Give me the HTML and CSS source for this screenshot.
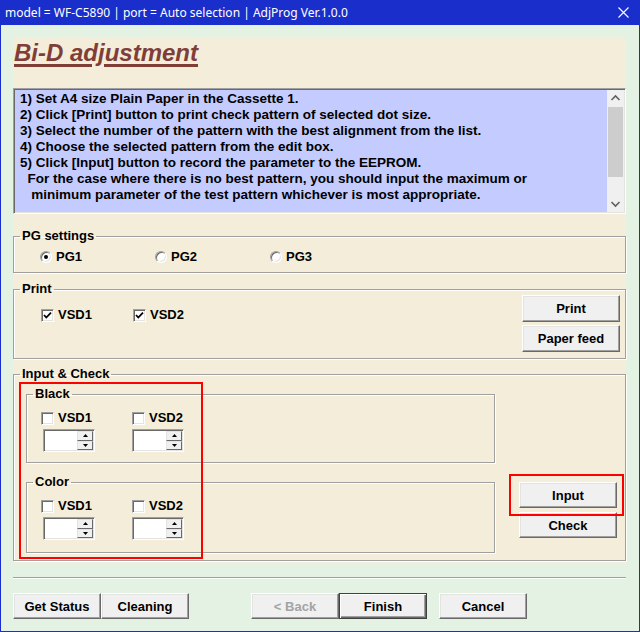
FILE: index.html
```html
<!DOCTYPE html>
<html>
<head>
<meta charset="utf-8">
<title>Bi-D adjustment</title>
<link rel="stylesheet" href="styles.css">
</head>
<body>
<div class="window">
  <div class="titlebar">
    <span class="title-text">model = WF-C5890 | port = Auto selection | AdjProg Ver.1.0.0</span>
    <svg class="close" width="11" height="11" viewBox="0 0 11 11"><path d="M0.5 0.5 L10.5 10.5 M10.5 0.5 L0.5 10.5" stroke="#fff" stroke-width="1.1" fill="none"/></svg>
  </div>
  <div class="client">
    <div class="panel">
      <div class="header"><h1 class="page-title">Bi-D adjustment</h1></div>
      <div class="instructions">
        <div class="instr-text">
          <div class="line">1) Set A4 size Plain Paper in the Cassette 1.</div>
          <div class="line">2) Click [Print] button to print check pattern of selected dot size.</div>
          <div class="line">3) Select the number of the pattern with the best alignment from the list.</div>
          <div class="line">4) Choose the selected pattern from the edit box.</div>
          <div class="line">5) Click [Input] button to record the parameter to the EEPROM.</div>
          <div class="line">  For the case where there is no best pattern, you should input the maximum or</div>
          <div class="line">   minimum parameter of the test pattern whichever is most appropriate.</div>
        </div>
        <div class="vscroll">
          <div class="sb-arrow"><svg width="17" height="17" viewBox="0 0 17 17"><path d="M4.5 10 L8.5 6 L12.5 10" stroke="#606060" stroke-width="1.6" fill="none"/></svg></div>
          <div class="sb-track"><div class="sb-thumb"></div></div>
          <div class="sb-arrow"><svg width="17" height="17" viewBox="0 0 17 17"><path d="M4.5 7 L8.5 11 L12.5 7" stroke="#606060" stroke-width="1.6" fill="none"/></svg></div>
        </div>
      </div>

      <fieldset class="group pg">
        <legend>PG settings</legend>
        <div class="radio-row">
          <label class="radio-item"><span class="radio checked"></span>PG1</label>
          <label class="radio-item"><span class="radio"></span>PG2</label>
          <label class="radio-item"><span class="radio"></span>PG3</label>
        </div>
      </fieldset>

      <fieldset class="group print">
        <legend>Print</legend>
        <div class="print-body">
          <div class="check-row">
            <label class="check-item"><span class="checkbox"><svg width="11" height="11" viewBox="0 0 11 11"><path d="M2 5 L4.3 7.5 L9 2.6" stroke="#000" stroke-width="1.8" fill="none"/></svg></span>VSD1</label>
            <label class="check-item"><span class="checkbox"><svg width="11" height="11" viewBox="0 0 11 11"><path d="M2 5 L4.3 7.5 L9 2.6" stroke="#000" stroke-width="1.8" fill="none"/></svg></span>VSD2</label>
          </div>
          <div class="btn-col">
            <button class="btn btn-side">Print</button>
            <button class="btn btn-side">Paper feed</button>
          </div>
        </div>
      </fieldset>

      <fieldset class="group input-check">
        <legend>Input &amp; Check</legend>
        <div class="ic-body">
          <div class="ic-left">
            <fieldset class="group sub">
              <legend>Black</legend>
              <div class="sub-grid">
                <label class="check-item"><span class="checkbox"></span>VSD1</label>
                <label class="check-item"><span class="checkbox"></span>VSD2</label>
                <div class="spin first">
                  <div class="spin-field"></div>
                  <div class="spin-btns">
                    <div class="spin-btn"><svg width="5" height="3" viewBox="0 0 5 3"><polygon points="0,3 2.5,0 5,3" fill="#000"/></svg></div>
                    <div class="spin-btn"><svg width="5" height="3" viewBox="0 0 5 3"><polygon points="0,0 2.5,3 5,0" fill="#000"/></svg></div>
                  </div>
                </div>
                <div class="spin">
                  <div class="spin-field"></div>
                  <div class="spin-btns">
                    <div class="spin-btn"><svg width="5" height="3" viewBox="0 0 5 3"><polygon points="0,3 2.5,0 5,3" fill="#000"/></svg></div>
                    <div class="spin-btn"><svg width="5" height="3" viewBox="0 0 5 3"><polygon points="0,0 2.5,3 5,0" fill="#000"/></svg></div>
                  </div>
                </div>
              </div>
            </fieldset>
            <fieldset class="group sub color">
              <legend>Color</legend>
              <div class="sub-grid">
                <label class="check-item"><span class="checkbox"></span>VSD1</label>
                <label class="check-item"><span class="checkbox"></span>VSD2</label>
                <div class="spin first">
                  <div class="spin-field"></div>
                  <div class="spin-btns">
                    <div class="spin-btn"><svg width="5" height="3" viewBox="0 0 5 3"><polygon points="0,3 2.5,0 5,3" fill="#000"/></svg></div>
                    <div class="spin-btn"><svg width="5" height="3" viewBox="0 0 5 3"><polygon points="0,0 2.5,3 5,0" fill="#000"/></svg></div>
                  </div>
                </div>
                <div class="spin">
                  <div class="spin-field"></div>
                  <div class="spin-btns">
                    <div class="spin-btn"><svg width="5" height="3" viewBox="0 0 5 3"><polygon points="0,3 2.5,0 5,3" fill="#000"/></svg></div>
                    <div class="spin-btn"><svg width="5" height="3" viewBox="0 0 5 3"><polygon points="0,0 2.5,3 5,0" fill="#000"/></svg></div>
                  </div>
                </div>
              </div>
            </fieldset>
          </div>
          <div class="ic-right">
            <button class="btn btn-side">Input</button>
            <button class="btn btn-side">Check</button>
          </div>
          <div class="hl hl-left"></div>
          <div class="hl hl-input"></div>
        </div>
      </fieldset>
    </div>

    <div class="separator"></div>

    <div class="bottom-bar">
      <button class="btn btn-bottom">Get Status</button>
      <button class="btn btn-bottom">Cleaning</button>
      <button class="btn btn-bottom btn-back" disabled>&lt; Back</button>
      <button class="btn btn-bottom btn-default">Finish</button>
      <button class="btn btn-bottom btn-cancel">Cancel</button>
    </div>
  </div>
</div>
</body>
</html>
```
FILE: styles.css
```css
* { box-sizing: border-box; }
html, body { margin: 0; padding: 0; }
body {
  width: 640px;
  height: 632px;
  overflow: hidden;
  font-family: "Liberation Sans", Arial, sans-serif;
  font-size: 13px;
  font-weight: bold;
  color: #000;
  background: #e3f2e3;
}
.window {
  width: 640px;
  height: 632px;
  display: flex;
  flex-direction: column;
}
.titlebar {
  height: 25px;
  flex: none;
  background: #192ecb;
  color: #fff;
  display: flex;
  align-items: center;
  justify-content: space-between;
  padding: 0 11px 0 5px;
  font-family: "Noto Sans", "Liberation Sans", sans-serif;
  font-weight: normal;
  font-size: 12px;
}
.close { display: block; }
.client {
  flex: 1;
  background: #e3f2e3;
  border: 1px solid #192ecb;
  border-top: 0;
  padding: 13px 13px 0 12px;
  display: flex;
  flex-direction: column;
}
.panel {
  background: #f4edda;
  display: flex;
  flex-direction: column;
  padding-bottom: 3px;
  flex: none;
}
.header {
  height: 50px;
  padding: 1px 0 0 1px;
}
.page-title {
  margin: 0;
  font-family: "Liberation Sans", Arial, sans-serif;
  font-style: italic;
  font-weight: bold;
  font-size: 24px;
  line-height: 28px;
  color: #803e38;
  text-decoration: underline;
  text-decoration-thickness: 3px;
  text-underline-offset: 3px;
}
.instructions {
  height: 126px;
  display: flex;
  border: 1px solid;
  border-color: #a0a0a0 #ffffff #ffffff #a0a0a0;
  box-shadow: inset 1px 1px 0 #696969, inset -1px -1px 0 #e3e3e3;
  background: #c4ccff;
  padding: 1px;
}
.instr-text {
  flex: 1;
  padding: 1px 0 0 5px;
  font-size: 13.5px;
  line-height: 16px;
}
.line { white-space: pre; }
.vscroll {
  width: 17px;
  background: #f0f0f0;
  display: flex;
  flex-direction: column;
}
.sb-arrow { height: 17px; }
.sb-arrow svg { display: block; }
.sb-track { flex: 1; padding: 0 1px; }
.sb-thumb { height: 70px; background: #cdcdcd; }

fieldset.group {
  margin: 0;
  padding: 0;
  min-width: 0;
  border: 1px solid #a0a0a0;
  box-shadow: inset 1px 1px 0 #ffffff, 1px 1px 0 #ffffff;
}
fieldset.group > legend {
  margin-left: 6px;
  padding: 0 2px;
  line-height: 16px;
}
.pg { margin-top: 14px !important; }
.radio-row {
  display: flex;
  padding: 5px 0 7px 26px;
  line-height: 16px;
}
.radio-item {
  width: 115px;
  display: flex;
  align-items: center;
}
.radio {
  width: 12px;
  height: 12px;
  border-radius: 50%;
  background: #fff;
  border: 1px solid;
  border-color: #a0a0a0 #ffffff #ffffff #a0a0a0;
  box-shadow: inset 1px 1px 0 #696969, inset -1px -1px 0 #e3e3e3;
  margin-right: 4px;
  position: relative;
}
.radio.checked::after {
  content: "";
  position: absolute;
  left: 3px;
  top: 3px;
  width: 4px;
  height: 4px;
  border-radius: 50%;
  background: #000;
}
.print { margin-top: 8px !important; }
.print-body {
  display: flex;
  justify-content: space-between;
  padding: 0 5px 6px 27px;
}
.check-row {
  display: flex;
  margin-top: 10px;
  align-self: flex-start;
  line-height: 16px;
}
.check-item {
  width: 92px;
  display: flex;
  align-items: center;
  line-height: 16px;
}
.checkbox {
  width: 13px;
  height: 13px;
  flex: none;
  background: #fff;
  border: 1px solid;
  border-color: #a0a0a0 #ffffff #ffffff #a0a0a0;
  box-shadow: inset 1px 1px 0 #696969, inset -1px -1px 0 #e3e3e3;
  margin-right: 4px;
  display: flex;
  align-items: center;
  justify-content: center;
}
.checkbox svg { display: block; }
.btn-col {
  display: flex;
  flex-direction: column;
  gap: 3px;
  margin-top: -2px;
}
.btn-col .btn { height: 27px; }
.btn {
  font: inherit;
  color: #000;
  background: #f0f0f0;
  border: 1px solid;
  border-color: #ffffff #696969 #696969 #ffffff;
  box-shadow: inset -1px -1px 0 #a0a0a0, inset 1px 1px 0 #e3e3e3;
  padding: 0;
  margin: 0;
  height: 26px;
  border-radius: 0;
}
.btn-side { width: 98px; }
.input-check { margin-top: 7px !important; }
.ic-body {
  position: relative;
  display: flex;
  padding: 4px 8px 7px 12px;
}
.ic-left {
  width: 469px;
  display: flex;
  flex-direction: column;
}
.sub-grid {
  display: grid;
  grid-template-columns: 91px 91px;
  row-gap: 3px;
  padding: 8px 0 10px 14px;
}
.color { margin-top: 11px !important; }
.color .sub-grid { padding-bottom: 12px; }
.sub-grid .check-item { width: auto; }
.spin {
  width: 52px;
  height: 23px;
  display: flex;
  background: #fff;
  border: 1px solid;
  border-color: #a0a0a0 #ffffff #ffffff #a0a0a0;
  box-shadow: inset 1px 1px 0 #696969, inset -1px -1px 0 #e3e3e3;
  padding: 1px;
}
.spin.first { margin-left: 2px; }
.spin-field { flex: 1; }
.spin-btns {
  width: 16px;
  display: flex;
  flex-direction: column;
}
.spin-btn {
  flex: 1;
  background: #f0f0f0;
  border: 1px solid;
  border-color: #e3e3e3 #696969 #696969 #e3e3e3;
  display: flex;
  align-items: center;
  justify-content: center;
}
.spin-btn svg { display: block; }
.ic-right {
  margin-left: auto;
  padding-top: 96px;
  display: flex;
  flex-direction: column;
  gap: 4px;
}
.hl {
  position: absolute;
  border: 2px solid #ff0000;
  pointer-events: none;
}
.hl-left { left: 5px; top: 0; width: 184px; height: 177px; }
.hl-input { left: 495px; top: 92px; width: 115px; height: 42px; }

.separator {
  height: 2px;
  margin-top: 13px;
  border-top: 1px solid #a0a0a0;
  border-bottom: 1px solid #ffffff;
  flex: none;
}
.bottom-bar {
  display: flex;
  margin-top: 14px;
}
.btn-bottom { width: 88px; }
.btn-back { margin-left: 62px; color: #a3a3a3; }
.btn-cancel { margin-left: 12px; }
.btn-default {
  border: 1px solid #404040;
  box-shadow: inset 1px 1px 0 #ffffff, inset -1px -1px 0 #696969, inset -2px -2px 0 #a0a0a0;
}
```
